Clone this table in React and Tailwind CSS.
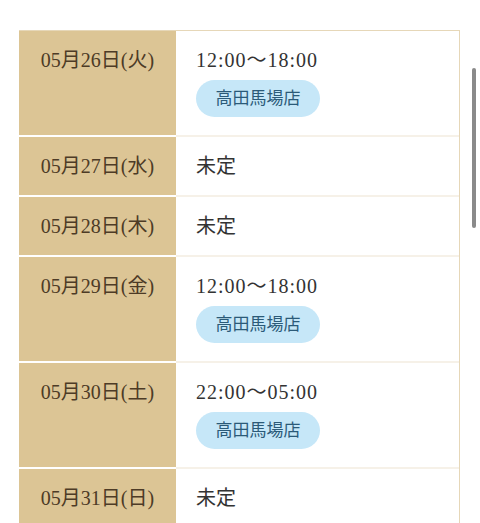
const rows = [
  { date: '05月26日(火)', time: '12:00〜18:00', shop: '高田馬場店' },
  { date: '05月27日(水)', time: '未定' },
  { date: '05月28日(木)', time: '未定' },
  { date: '05月29日(金)', time: '12:00〜18:00', shop: '高田馬場店' },
  { date: '05月30日(土)', time: '22:00〜05:00', shop: '高田馬場店' },
  { date: '05月31日(日)', time: '未定' },
];

export default function App() {
  return (
    <div
      className="relative h-[523px] w-[480px] overflow-hidden bg-white pt-[30px] pl-[19px]"
      style={{ fontFamily: '"Liberation Serif", "Noto Sans CJK JP", serif' }}
    >
      <div className="w-[441px] border-t border-r border-[#e6d7b8]">
        {rows.map((r, i) => (
          <div key={i} className={`flex ${i > 0 ? 'border-t-2 border-white' : ''}`}>
            <div className="w-[157px] shrink-0 bg-[#dcc595] py-[15px] text-center text-[20px] leading-[28px] text-[#4d3b26]">
              {r.date}
            </div>
            <div className={`flex-1 py-[15px] pl-[20px] text-[20px] leading-[28px] text-[#333] ${i > 0 ? '-mt-[2px] border-t-2 border-[#f6f1e8]' : ''}`}>
              <div className={r.shop ? 'tracking-[1px]' : ''}>{r.time}</div>
              {r.shop && (
                <div className="mt-[6px] mb-[3px] inline-flex h-[37px] w-[124px] items-center justify-center rounded-full bg-[#c6e7f8] text-[17px] text-[#2b5a78]">
                  {r.shop}
                </div>
              )}
            </div>
          </div>
        ))}
      </div>
      <div className="absolute left-[472px] top-[68px] h-[160px] w-[4px] rounded-full bg-[#8a8a8a]" />
    </div>
  );
}
